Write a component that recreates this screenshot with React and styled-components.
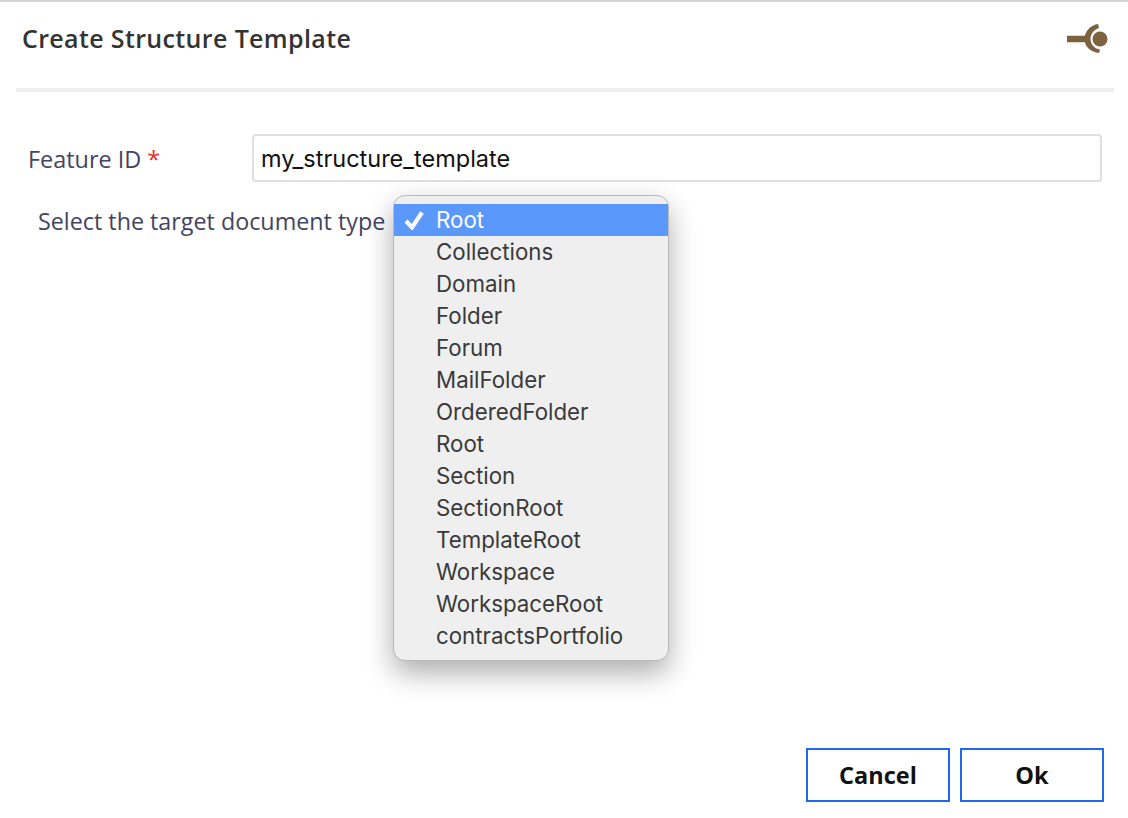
import React from 'react'
import styled, { createGlobalStyle } from 'styled-components'

const GlobalStyle = createGlobalStyle`
  html, body {
    margin: 0;
    padding: 0;
    background: #fff;
  }
  body {
    font-family: "Open Sans", "Liberation Sans", sans-serif;
  }
`

const Dialog = styled.div`
  display: flex;
  flex-direction: column;
  box-sizing: border-box;
  width: 1128px;
  height: 818px;
  overflow: hidden;
  border-top: 2px solid #d4d4d4;
  padding: 0 14px 16px 16px;
`

const Header = styled.div`
  display: flex;
  align-items: center;
  justify-content: space-between;
  box-sizing: border-box;
  height: 90px;
  padding: 0 6px 14px 6px;
  border-bottom: 4px solid #eeeeee;
`

const Title = styled.h1`
  margin: 0;
  font-size: 25px;
  font-weight: 600;
  letter-spacing: 0.36px;
  color: #333;
`

const Form = styled.div`
  display: flex;
  flex-direction: column;
  padding: 42px 12px 0 12px;
`

const FieldRow = styled.div`
  display: flex;
  align-items: center;
`

const FieldLabel = styled.label`
  width: 224px;
  padding-top: 1px;
  font-size: 23.4px;
  color: #44445f;
`

const Required = styled.span`
  color: #e8302a;
`

const TextInput = styled.input`
  flex: 1;
  box-sizing: border-box;
  height: 48px;
  padding: 0 7px;
  border: 2px solid #dfdfdf;
  border-radius: 4px;
  outline: none;
  font-family: Inter, "Noto Sans", sans-serif;
  font-size: 23.5px;
  color: #111;
`

const SelectRow = styled.div`
  position: relative;
  display: flex;
  align-items: center;
  height: 30px;
  margin-top: 24px;
  padding-left: 10px;
`

const SelectLabel = styled.span`
  font-size: 23.3px;
  color: #44445f;
`

const Menu = styled.ul`
  position: absolute;
  top: -11px;
  left: 365px;
  box-sizing: border-box;
  width: 276px;
  margin: 0;
  padding: 8px 0 8px;
  list-style: none;
  background: #efefef;
  border: 1px solid #b9b9b9;
  border-radius: 12px;
  box-shadow: 0 12px 28px rgba(0, 0, 0, 0.32);
`

const MenuItem = styled.li`
  position: relative;
  height: 32px;
  padding-left: 42px;
  font-family: Inter, "Noto Sans", sans-serif;
  font-size: 22.3px;
  line-height: 32px;
  color: ${p => (p.$selected ? '#fff' : '#3a3a3a')};
  background: ${p => (p.$selected ? '#5a98fb' : 'transparent')};
`

const Check = styled.svg`
  position: absolute;
  top: 6px;
  left: 9px;
`

const Footer = styled.div`
  display: flex;
  justify-content: flex-end;
  gap: 10px;
  margin-top: auto;
  padding-right: 10px;
`

const Button = styled.button`
  box-sizing: border-box;
  width: 144px;
  height: 54px;
  padding: 0;
  background: #fff;
  border: 2px solid #2068ee;
  font-family: "Open Sans", "Liberation Sans", sans-serif;
  font-size: 23.5px;
  font-weight: 700;
  color: #111;
`

const LogoMark = () => (
  <svg width="42" height="34" viewBox="0 0 42 34">
    <path d="M1 18H20" stroke="#7d6240" strokeWidth="6.5" fill="none" />
    <path d="M32 3C25 4 18.5 10 18.5 18C18.5 26 25 31 33 32L34 28.5C28 27.5 24.5 23 24.5 18C24.5 13 28 8.5 33 7Z" fill="#7d6240" />
    <circle cx="34" cy="18" r="7.5" fill="#7d6240" />
  </svg>
)

const docTypes = [
  'Root',
  'Collections',
  'Domain',
  'Folder',
  'Forum',
  'MailFolder',
  'OrderedFolder',
  'Root',
  'Section',
  'SectionRoot',
  'TemplateRoot',
  'Workspace',
  'WorkspaceRoot',
  'contractsPortfolio'
]

const App = () => (
  <Dialog>
    <GlobalStyle />
    <Header>
      <Title>Create Structure Template</Title>
      <LogoMark />
    </Header>
    <Form>
      <FieldRow>
        <FieldLabel>Feature ID <Required>*</Required></FieldLabel>
        <TextInput defaultValue="my_structure_template" />
      </FieldRow>
      <SelectRow>
        <SelectLabel>Select the target document type</SelectLabel>
        <Menu>
          {docTypes.map((name, i) => (
            <MenuItem key={i} $selected={i === 0}>
              {i === 0 && (
                <Check width="24" height="20" viewBox="0 0 24 20">
                  <path d="M3 11L9 17.5L19 2.5" stroke="#fff" strokeWidth="4.2" fill="none" />
                </Check>
              )}
              {name}
            </MenuItem>
          ))}
        </Menu>
      </SelectRow>
    </Form>
    <Footer>
      <Button>Cancel</Button>
      <Button>Ok</Button>
    </Footer>
  </Dialog>
)

export default App
